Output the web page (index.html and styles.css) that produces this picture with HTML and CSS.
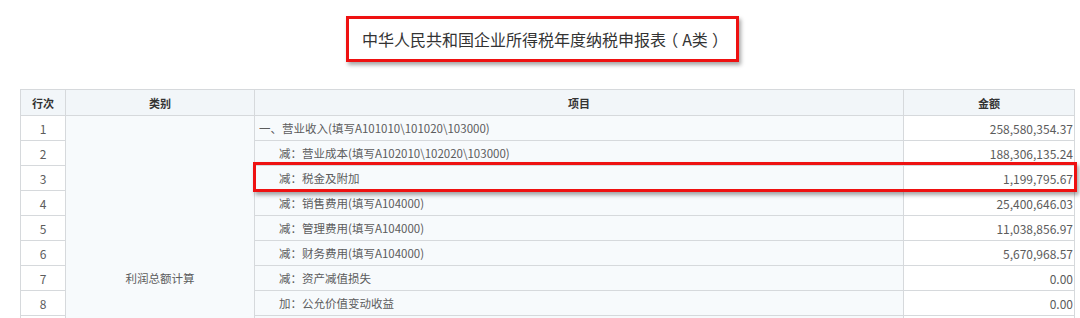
FILE: index.html
```html
<!DOCTYPE html>
<html lang="zh-CN">
<head>
<meta charset="utf-8">
<link rel="stylesheet" href="styles.css">
</head>
<body>
<div class="page">
  <div class="title-wrap">
    <h1 class="title">中华人民共和国企业所得税年度纳税申报表<span class="paren">（</span>A类<span class="paren">）</span></h1>
  </div>
  <div class="table-wrap">
    <table class="report">
      <colgroup>
        <col class="c-no">
        <col class="c-cat">
        <col class="c-item">
        <col class="c-amt">
      </colgroup>
      <thead>
        <tr><th>行次</th><th>类别</th><th>项目</th><th>金额</th></tr>
      </thead>
      <tbody>
        <tr><td class="no">1</td><td class="cat" rowspan="13">利润总额计算</td><td class="item">一、营业收入(填写A101010\101020\103000)</td><td class="amt">258,580,354.37</td></tr>
        <tr><td class="no">2</td><td class="item sub">减：营业成本(填写A102010\102020\103000)</td><td class="amt">188,306,135.24</td></tr>
        <tr><td class="no">3</td><td class="item sub">减：税金及附加</td><td class="amt">1,199,795.67</td></tr>
        <tr><td class="no">4</td><td class="item sub">减：销售费用(填写A104000)</td><td class="amt">25,400,646.03</td></tr>
        <tr><td class="no">5</td><td class="item sub">减：管理费用(填写A104000)</td><td class="amt">11,038,856.97</td></tr>
        <tr><td class="no">6</td><td class="item sub">减：财务费用(填写A104000)</td><td class="amt">5,670,968.57</td></tr>
        <tr><td class="no">7</td><td class="item sub">减：资产减值损失</td><td class="amt">0.00</td></tr>
        <tr><td class="no">8</td><td class="item sub">加：公允价值变动收益</td><td class="amt">0.00</td></tr>
        <tr class="rest"><td class="no"></td><td class="item sub"></td><td class="amt"></td></tr>
        <tr class="rest"><td class="no"></td><td class="item"></td><td class="amt"></td></tr>
        <tr class="rest"><td class="no"></td><td class="item sub"></td><td class="amt"></td></tr>
        <tr class="rest"><td class="no"></td><td class="item sub"></td><td class="amt"></td></tr>
        <tr class="rest"><td class="no"></td><td class="item"></td><td class="amt"></td></tr>
      </tbody>
    </table>
    <div class="highlight"></div>
  </div>
</div>
</body>
</html>
```

FILE: styles.css
```css
html, body {
  margin: 0;
  padding: 0;
  background: #ffffff;
  overflow: hidden;
}

.page {
  width: 1080px;
  height: 318px;
  overflow: hidden;
  font-family: "Noto Sans CJK SC", "Noto Sans", sans-serif;
}

.title-wrap {
  display: flex;
  justify-content: center;
  padding: 16px 0 0 5px;
  height: 89px;
  box-sizing: border-box;
}

.title {
  margin: 0;
  height: 46px;
  box-sizing: border-box;
  padding: 0 12px 0 13px;
  display: flex;
  align-items: center;
  border: 3px solid #ee1111;
  box-shadow: 2px 3px 4px rgba(0, 0, 0, 0.35);
  font-size: 16px;
  font-weight: normal;
  color: #333333;
  white-space: nowrap;
}

.title .paren {
  font-feature-settings: "halt";
  margin: 0 4px;
}

.table-wrap {
  position: relative;
  margin-left: 20px;
  width: 1054px;
}

.report {
  border-collapse: collapse;
  table-layout: fixed;
  width: 1054px;
  font-size: 11.5px;
  color: #5c5c5c;
}

.c-no { width: 45px; }
.c-cat { width: 189px; }
.c-item { width: 649px; }
.c-amt { width: 171px; }

.report th,
.report td {
  border: 1px solid #d6d9dc;
  height: 24px;
  padding: 0;
  white-space: nowrap;
  overflow: hidden;
}

.report th {
  height: 25px;
  background: #f2f6f9;
  color: #333333;
  font-weight: bold;
  font-size: 11px;
  text-align: center;
}

.report td.no {
  text-align: center;
  background: #ffffff;
  font-size: 12px;
}

.report td.cat {
  text-align: center;
  background: #f7fafc;
  vertical-align: middle;
}

.report td.item {
  background: #f7fafc;
  padding-left: 4px;
}

.report td.item.sub {
  padding-left: 24px;
}

.report td.amt {
  text-align: right;
  padding-right: 1px;
  background: #ffffff;
  font-size: 12px;
}

.highlight {
  position: absolute;
  left: 233px;
  top: 73px;
  width: 824px;
  height: 30px;
  box-sizing: border-box;
  border: 3px solid #ee1111;
  box-shadow: 2px 3px 4px rgba(0, 0, 0, 0.35);
  pointer-events: none;
}
```
